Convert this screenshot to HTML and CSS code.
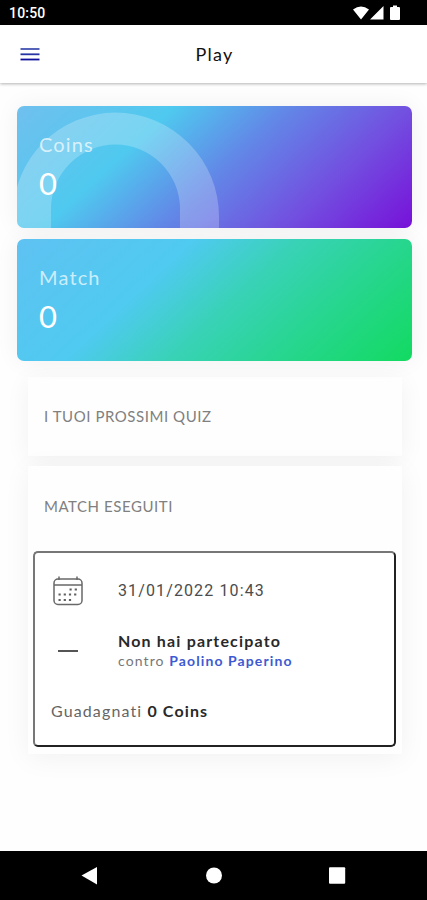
FILE: index.html
```html
<!DOCTYPE html>
<html lang="it">
<head>
<meta charset="utf-8">
<title>Play</title>
<link rel="stylesheet" href="styles.css">
</head>
<body>
<div class="status">
  <span class="clock">10:50</span>
  <svg class="signals" width="50" height="18" viewBox="0 0 50 18" fill="#fff"><path d="M1 4.500Q9-1.500 17 4.500L9 14.500ZM18 14.500 31.500 1V14.500ZM38 3Q38 2 39 2H41V.5H45V2H47Q48 2 48 3V14Q48 15 47 15H39Q38 15 38 14Z"/></svg>
</div>
<header class="appbar">
  <svg class="menu" width="20" height="14" viewBox="0 0 20 14" fill="none" stroke-width="1.800"><path stroke="#4252b0" d="M.5 2H19.500"/><path stroke="#2634a4" d="M.5 7.300H19.500"/><path stroke="#10109b" d="M.5 12.500H19.500"/></svg>
  <h1 class="title">Play</h1>
</header>
<main class="content">
  <section class="stat coins">
    <svg class="arch" width="394" height="122" viewBox="0 0 394 122"><path fill="#fff" fill-opacity=".23" d="M-4 122V109A103 103 0 0 1 98 6.500A104 104 0 0 1 202 111V122H163V103A64.500 64.500 0 0 0 98.500 38.500A64.500 64.500 0 0 0 34 103V122Z"/></svg>
    <div class="label">Coins</div>
    <div class="value">0</div>
  </section>
  <section class="stat match">
    <div class="label">Match</div>
    <div class="value">0</div>
  </section>
  <section class="panel next">
    <h2>I TUOI PROSSIMI QUIZ</h2>
  </section>
  <section class="panel done">
    <h2>MATCH ESEGUITI</h2>
    <article class="card">
      <div class="row">
        <svg class="cal" width="32" height="32" viewBox="0 0 32 32" fill="none" stroke="#686868" stroke-width="1.500"><rect x="2" y="4" width="28" height="25.500" rx="4"/><path d="M2 10H30M7 1.500V5M25 1.500V5"/><path stroke="#606060" stroke-width="2" stroke-dasharray="2.200 3" d="M17.500 14.500H26M6.500 19.500H26M6.500 25H20"/></svg>
        <time class="date">31/01/2022 10:43</time>
      </div>
      <div class="row result">
        <span class="dash"></span>
        <div>
          <div class="outcome">Non hai partecipato</div>
          <div class="versus">contro <b>Paolino Paperino</b></div>
        </div>
      </div>
      <div class="earned">Guadagnati <b>0 Coins</b></div>
    </article>
  </section>
</main>
<nav class="navbar">
  <svg width="427" height="49" viewBox="0 0 427 49" fill="#fff"><path d="M81.500 24.500 97 16V33.500Z"/><circle cx="214" cy="24.500" r="8"/><rect x="329" y="16.300" width="16.200" height="16.500" rx="1"/></svg>
</nav>
</body>
</html>
```
FILE: styles.css
```css
* { box-sizing: border-box; }
body {
  margin: 0;
  width: 427px;
  height: 900px;
  overflow: hidden;
  display: flex;
  flex-direction: column;
  background: #fefefe;
  font-family: Lato, sans-serif;
}
h1, h2 { margin: 0; font-weight: 400; }
svg { display: block; }
.status {
  height: 25px;
  flex: none;
  background: #000;
  color: #fff;
  display: flex;
  justify-content: space-between;
  padding: 5px 25px 0 9px;
}
.clock { font: 500 14px/17px Roboto, sans-serif; letter-spacing: .2px; }
.appbar {
  height: 58px;
  flex: none;
  display: grid;
  grid-template-columns: 20px 1fr 20px;
  align-items: center;
  padding: 0 20px;
  background: #fff;
  box-shadow: 0 1px 3px rgba(0, 0, 0, .3);
  z-index: 1;
}
.menu { margin-top: -1px; }
.title {
  text-align: center;
  font-size: 18px;
  letter-spacing: 1.300px;
  color: #111;
  padding: 0 0 0 2px;
}
.content {
  flex: 1;
  display: flex;
  flex-direction: column;
  padding: 22.500px 15.500px 0 17px;
}
.stat {
  position: relative;
  height: 122px;
  flex: none;
  border-radius: 7px;
  padding: 25px 22px;
  color: #fff;
  overflow: hidden;
}
.coins { background: linear-gradient(137deg, #70c0ee 0%, #4fc9ef 30%, #6287e7 52%, #7250e0 75%, #7711d9 100%); }
.match {
  margin-top: 11px;
  background: linear-gradient(137deg, #5fc2f2 0%, #4fcaf0 34%, #39d2b8 53%, #26d68d 75%, #12da61 100%);
}
.coins, .match { box-shadow: 0 0 24px rgba(0, 0, 0, .06); }
.arch { position: absolute; left: 0; top: 0; }
.label {
  position: relative;
  font-size: 20px;
  line-height: 26px;
  letter-spacing: 1.150px;
  color: rgba(255, 255, 255, .7);
}
.value { position: relative; font-size: 31px; line-height: 40px; margin-top: 6px; }
.panel {
  margin: 0 9.500px 0 11px;
  background: #fefefe;
  box-shadow: 0 4px 26px rgba(0, 0, 0, .055);
}
.panel h2 {
  font-size: 15px;
  line-height: 20px;
  letter-spacing: .55px;
  color: #808080;
  padding-left: 16px;
}
.next { height: 79px; margin-top: 16.500px; padding-top: 29px; }
.done { height: 288px; margin-top: 10px; padding: 30px 5px 0; }
.panel.done h2 { padding-left: 11px; }
.card {
  margin-top: 35px;
  width: 363px;
  height: 196px;
  border: 2px solid;
  border-color: #777 #222 #222 #777;
  border-radius: 5px;
  background: #fff;
  padding: 22px 17px;
}
.row { display: grid; grid-template-columns: 66px 1fr; }
.date { font: 400 16px/32px Roboto, sans-serif; letter-spacing: 1.120px; color: #4c4c4c; }
.result { margin-top: 23px; }
.dash { width: 20px; height: 2px; background: #555; margin: 20px 0 0 6px; }
.outcome { font-size: 16px; font-weight: 700; line-height: 21px; letter-spacing: 1.170px; color: #292929; }
.versus { font-size: 14px; line-height: 20px; letter-spacing: 1.100px; color: #777; }
.versus b { color: #3d5ad2; }
.earned { margin: 29px 0 0 -1px; font-size: 16px; line-height: 22px; letter-spacing: 1.120px; color: #656565; }
.earned b { color: #292929; }
.navbar { height: 49px; flex: none; background: #000; }
```
